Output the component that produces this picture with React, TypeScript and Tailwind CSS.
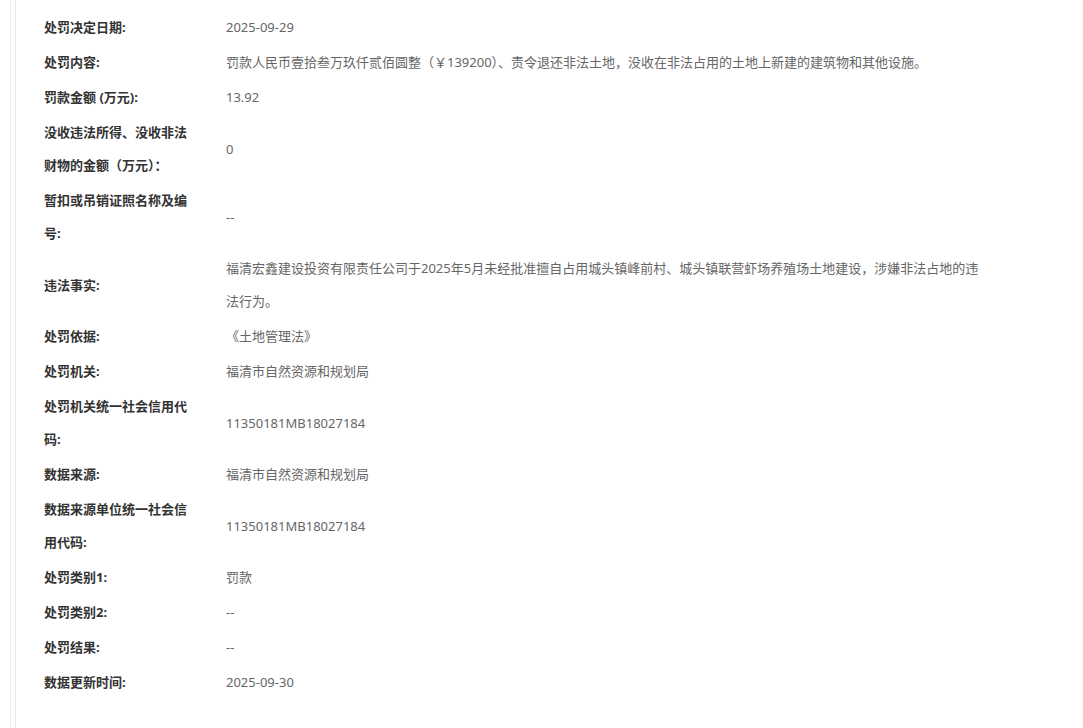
import React from "react";

const rows: { label: string; value: string }[] = [
  { label: "处罚决定日期:", value: "2025-09-29" },
  {
    label: "处罚内容:",
    value:
      "罚款人民币壹拾叁万玖仟贰佰圆整（￥139200）、责令退还非法土地，没收在非法占用的土地上新建的建筑物和其他设施。",
  },
  { label: "罚款金额 (万元):", value: "13.92" },
  { label: "没收违法所得、没收非法财物的金额（万元）：", value: "0" },
  { label: "暂扣或吊销证照名称及编号:", value: "--" },
  {
    label: "违法事实:",
    value:
      "福清宏鑫建设投资有限责任公司于2025年5月未经批准擅自占用城头镇峰前村、城头镇联营虾场养殖场土地建设，涉嫌非法占地的违法行为。",
  },
  { label: "处罚依据:", value: "《土地管理法》" },
  { label: "处罚机关:", value: "福清市自然资源和规划局" },
  { label: "处罚机关统一社会信用代码:", value: "11350181MB18027184" },
  { label: "数据来源:", value: "福清市自然资源和规划局" },
  { label: "数据来源单位统一社会信用代码:", value: "11350181MB18027184" },
  { label: "处罚类别1:", value: "罚款" },
  { label: "处罚类别2:", value: "--" },
  { label: "处罚结果:", value: "--" },
  { label: "数据更新时间:", value: "2025-09-30" },
];

export default function App() {
  return (
    <div
      className="w-[1083px] h-[728px] bg-white flex overflow-hidden text-[13px]"
      style={{ fontFamily: '"Noto Sans", "Noto Sans CJK SC", sans-serif' }}
    >
      <div className="w-[10px] shrink-0" />
      <div className="w-[5px] shrink-0 border-l border-[#f4f4f4]" />
      <div className="flex-1 border-l border-[#e9e9e9] pl-[28px] pt-[10px]">
        {rows.map((r) => (
          <div key={r.label} className="flex items-center py-px">
            <div className="w-[150px] shrink-0 font-bold text-[#333] leading-[33px]">
              {r.label}
            </div>
            <div className="ml-[32px] w-[762px] text-[#666] leading-[33px]">
              {r.value}
            </div>
          </div>
        ))}
      </div>
    </div>
  );
}
